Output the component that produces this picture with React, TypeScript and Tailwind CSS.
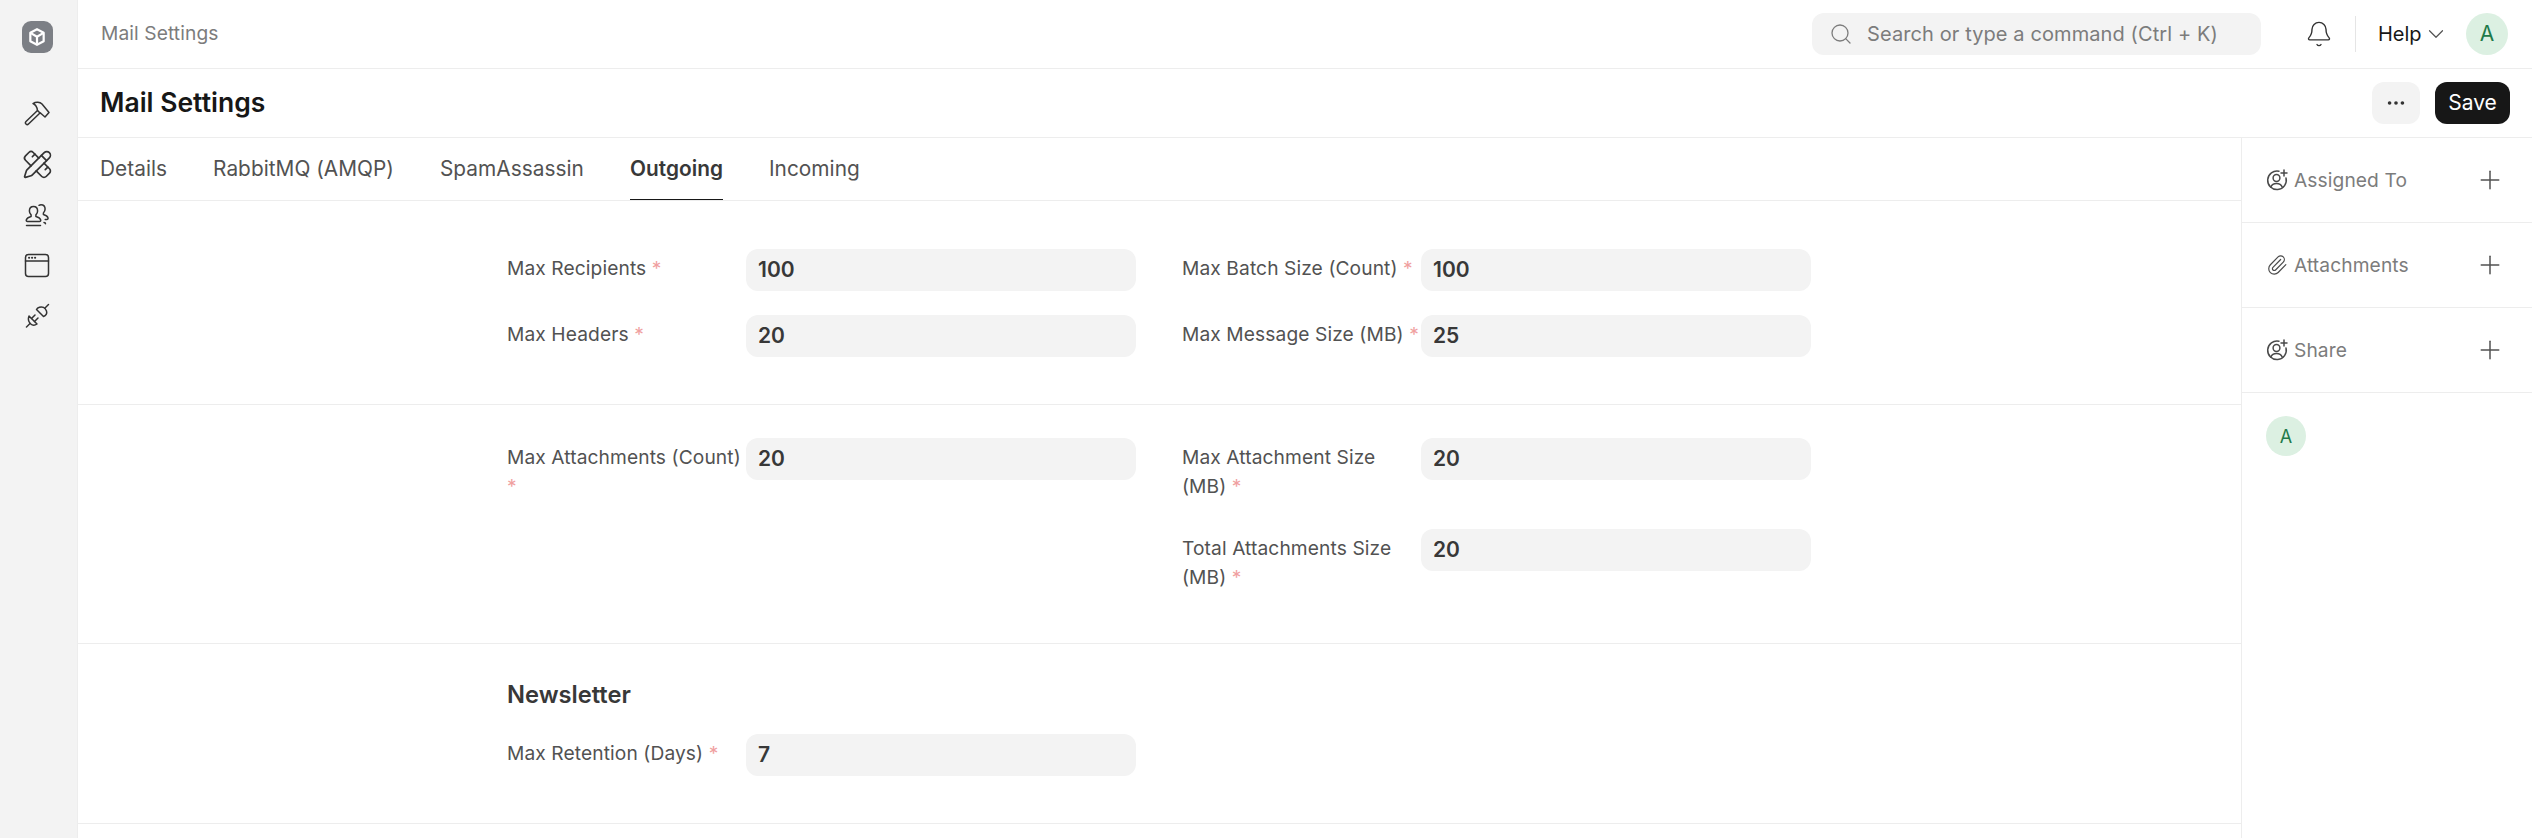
import React from "react";
import { Search, ChevronDown, Plus, Ellipsis, PencilRuler, Bell, Paperclip } from "lucide-react";

const UserPlus = () => (
  <svg width="22" height="22" viewBox="0 0 22 22" fill="none" stroke="#4a4a4a" strokeWidth="1.5" strokeLinecap="round" strokeLinejoin="round">
    <path d="M13 2.200A9.300 9.300 0 1 0 20 9" />
    <circle cx="10.500" cy="9" r="3.400" />
    <path d="M4.800 18c1-2.600 3.200-3.600 5.700-3.600s4.700 1 5.700 3.600" />
    <path d="M18 1v6M15 4h6" />
  </svg>
);

const HammerIcon = () => (
  <svg width="26" height="26" viewBox="0 0 26 26" fill="none" stroke="#333" strokeWidth="1.500" strokeLinecap="round" strokeLinejoin="round">
    <path d="M13.500 10.500L2 21.500a1.800 1.800 0 0 0 0 2.500 1.800 1.800 0 0 0 2.500 0L16 13" />
    <path d="M9 3.500C12 1.500 16 2 18 4l7 8.500-4 4.500-4-3.500-1-.5-2.500-2.500C13 7 11.500 4.500 9 3.500Z" />
  </svg>
);

const UsersIcon = () => (
  <svg width="26" height="24" viewBox="0 0 26 24" fill="none" stroke="#333" strokeWidth="1.500" strokeLinecap="round" strokeLinejoin="round">
    <path d="M9.500 3.500c2.700 0 4.100 2 4.100 4.500 0 1.700-.7 3-1.700 3.900v1.500c2.600.6 4.300 1.700 4.800 3.500.2.900-.3 1.600-1.200 1.600H3.500c-.9 0-1.400-.7-1.200-1.600.5-1.800 2.200-2.900 4.800-3.500v-1.500C6.100 11 5.400 9.700 5.400 8c0-2.500 1.400-4.500 4.100-4.500Z" />
    <path d="M15 2.300c.6-.4 1.300-.6 2-.6 2.700 0 4.100 2 4.100 4.400 0 1.700-.7 3-1.700 3.900v1.500c2.500.6 4.100 1.700 4.600 3.400.2.900-.3 1.600-1.200 1.600h-1.600" />
    <path d="M2.500 22.500h14M20 19.500c1 0 1.500.5 1.500 1.200" />
  </svg>
);

const AppIcon = () => (
  <svg width="26" height="25" viewBox="0 0 26 25" fill="none" stroke="#333" strokeWidth="1.500" strokeLinecap="round" strokeLinejoin="round">
    <rect x="1.500" y="1.500" width="23" height="22" rx="3" />
    <path d="M1.500 8h23" />
    <path d="M5 4.800h.2M8 4.800h.2M11 4.800h.2" strokeWidth="2" />
  </svg>
);

const PlugIcon = () => (
  <svg width="25" height="25" viewBox="0 0 25 25" fill="none" stroke="#333" strokeWidth="1.500" strokeLinecap="round" strokeLinejoin="round">
    <path d="M11.500 6.500l7 7c2.500-.6 3.800-3.200 3-5.500-.6-1.700-1.500-2.800-3-3.600-2.500-1.200-6 0-7 2.100Z" />
    <path d="M20 5l3.500-3.500" />
    <path d="M4 13l8 8c-2 1.500-4.800 1.400-6.500-.2C3.700 19 3 15.500 4 13Z" />
    <path d="M5 20.500l-3.500 3.500" />
    <path d="M6.500 15.500L10 12M9.500 18.500L13 15" />
  </svg>
);

const Logo = () => (
  <div className="flex h-8 w-[31px] items-center justify-center rounded-[9px] bg-[#7c7f85]">
    <svg width="20" height="20" viewBox="0 0 18 18" fill="none" stroke="#fff" strokeWidth="2" strokeLinejoin="round">
      <path d="M9 2l6 3.200v7.600L9 16l-6-3.200V5.200L9 2Z" />
      <path d="M3.500 5.500L9 8.800l5.500-3.300M9 8.800V15" />
    </svg>
  </div>
);

const Req = () => <span className="text-[#f0a0a0]"> *</span>;

const Field = ({ label, value }: { label: string; value: string }) => (
  <div className="grid grid-cols-[239px_390px]">
    <div className="pt-[5px] text-[19.2px] leading-[29px] tracking-[0.005em] text-[#525252]">
      {label}
      <Req />
    </div>
    <div className="flex h-[42px] items-center rounded-xl bg-[#f3f3f3] px-[12px] text-[21px] font-semibold text-[#383838]">
      {value}
    </div>
  </div>
);

const SideRow = ({ icon, label }: { icon: React.ReactNode; label: string }) => (
  <div className="flex h-[85px] items-center border-b border-[#ededed] pr-[27px] pl-[24px]">
    <div className="flex w-[22px] justify-center">{icon}</div>
    <span className="ml-[6px] flex-1 text-[19.2px] tracking-[0.005em] text-[#7c7c7c]">{label}</span>
    <Plus size={30} strokeWidth={1.2} color="#525252" />
  </div>
);

const tabs = ["Details", "RabbitMQ (AMQP)", "SpamAssassin", "Outgoing", "Incoming"];

export default function App() {
  return (
    <div className="flex h-[838px] w-[2532px] overflow-hidden bg-white font-['Inter',sans-serif]">
      <aside className="flex w-[78px] shrink-0 flex-col items-center border-r border-[#ededed] bg-[#f3f3f3] pt-[21px] pr-[3px]">
        <Logo />
        <div className="mt-[35px] flex flex-col items-center">
          <div className="flex h-[50px] items-center"><HammerIcon /></div>
          <div className="flex h-[52px] items-center"><PencilRuler size={31} strokeWidth={1.3} color="#333" /></div>
          <div className="flex h-[50px] items-center"><UsersIcon /></div>
          <div className="flex h-[50px] items-center"><AppIcon /></div>
          <div className="flex h-[50px] items-center"><PlugIcon /></div>
        </div>
      </aside>
      <div className="flex min-w-0 flex-1 flex-col">
        <header className="flex h-[69px] shrink-0 items-center border-b border-[#ededed] pr-[24px] pl-[24px]">
          <span className="ml-[-1px] -translate-y-[1px] text-[19.2px] tracking-[0.005em] text-[#7c7c7c]">Mail Settings</span>
          <div className="ml-auto flex h-[42px] w-[449px] items-center rounded-xl bg-[#f3f3f3] pl-[17px] text-[#7c7c7c]">
            <Search size={24} strokeWidth={1.3} />
            <span className="ml-[14px] text-[20px] tracking-[0.005em]">Search or type a command (Ctrl + K)</span>
          </div>
          <Bell size={28} strokeWidth={1.2} color="#333" className="ml-[44px]" />
          <div className="ml-[22px] h-[36px] w-px bg-[#e5e5e5]" />
          <span className="ml-[22px] w-[42px] text-[20px] text-[#171717]">Help</span>
          <ChevronDown size={26} strokeWidth={1.1} color="#525252" className="ml-[3px]" />
          <div className="ml-[17px] flex h-[42px] w-[42px] shrink-0 items-center justify-center rounded-full bg-[#dcf0e2] text-[21px] text-[#1f7a4a]">A</div>
        </header>
        <div className="flex h-[69px] shrink-0 items-center border-b border-[#ededed] pr-[22px] pl-[22px]">
          <h1 className="text-[26.5px] font-semibold text-[#171717]">Mail Settings</h1>
          <div className="ml-auto flex h-[42px] w-[48px] items-center justify-center rounded-xl bg-[#f3f3f3]">
            <Ellipsis size={22} strokeWidth={2} color="#333" />
          </div>
          <div className="ml-[15px] flex h-[42px] w-[75px] items-center justify-center rounded-xl bg-[#171717] text-[21px] text-white">Save</div>
        </div>
        <div className="flex min-h-0 flex-1">
          <main className="min-w-0 flex-1">
            <nav className="flex h-[63px] items-stretch gap-[46px] border-b border-[#ededed] pl-[22px]">
              {tabs.map((t) => (
                <div
                  key={t}
                  className={
                    t === "Outgoing"
                      ? "flex items-center border-b-[1.5px] border-[#171717] text-[20.8px] font-semibold tracking-[0.002em] text-[#383838]"
                      : "flex items-center pb-[1px] text-[20.8px] tracking-[0.002em] text-[#525252]"
                  }
                >
                  {t}
                </div>
              ))}
            </nav>
            <section className="border-b border-[#ededed] pt-[48px] pb-[47px]">
              <div className="ml-[429px] grid w-[1304px] grid-cols-[629px_629px] gap-x-[46px] gap-y-[24px]">
                <Field label="Max Recipients" value="100" />
                <Field label="Max Batch Size (Count)" value="100" />
                <Field label="Max Headers" value="20" />
                <Field label="Max Message Size (MB)" value="25" />
              </div>
            </section>
            <section className="border-b border-[#ededed] pt-[33px] pb-[51px]">
              <div className="ml-[429px] grid w-[1304px] grid-cols-[629px_629px] gap-x-[46px]">
                <Field label="Max Attachments (Count)" value="20" />
                <div className="flex flex-col gap-[28px]">
                  <Field label="Max Attachment Size (MB)" value="20" />
                  <Field label="Total Attachments Size (MB)" value="20" />
                </div>
              </div>
            </section>
            <section className="border-b border-[#ededed] pt-[36px] pb-[47px]">
              <div className="ml-[429px] w-[1304px]">
                <h2 className="mb-[24px] text-[23.7px] leading-[30px] font-semibold text-[#383838]">Newsletter</h2>
                <div className="w-[629px]">
                  <Field label="Max Retention (Days)" value="7" />
                </div>
              </div>
            </section>
          </main>
          <aside className="w-[291px] shrink-0 border-l border-[#ededed]">
            <SideRow icon={<UserPlus />} label="Assigned To" />
            <SideRow icon={<Paperclip size={24} strokeWidth={1.3} color="#4a4a4a" />} label="Attachments" />
            <SideRow icon={<UserPlus />} label="Share" />
            <div className="pt-[23px] pl-[24px]">
              <div className="flex h-10 w-10 items-center justify-center rounded-full bg-[#dcf0e2] text-[18px] text-[#1f7a4a]">A</div>
            </div>
          </aside>
        </div>
      </div>
    </div>
  );
}
